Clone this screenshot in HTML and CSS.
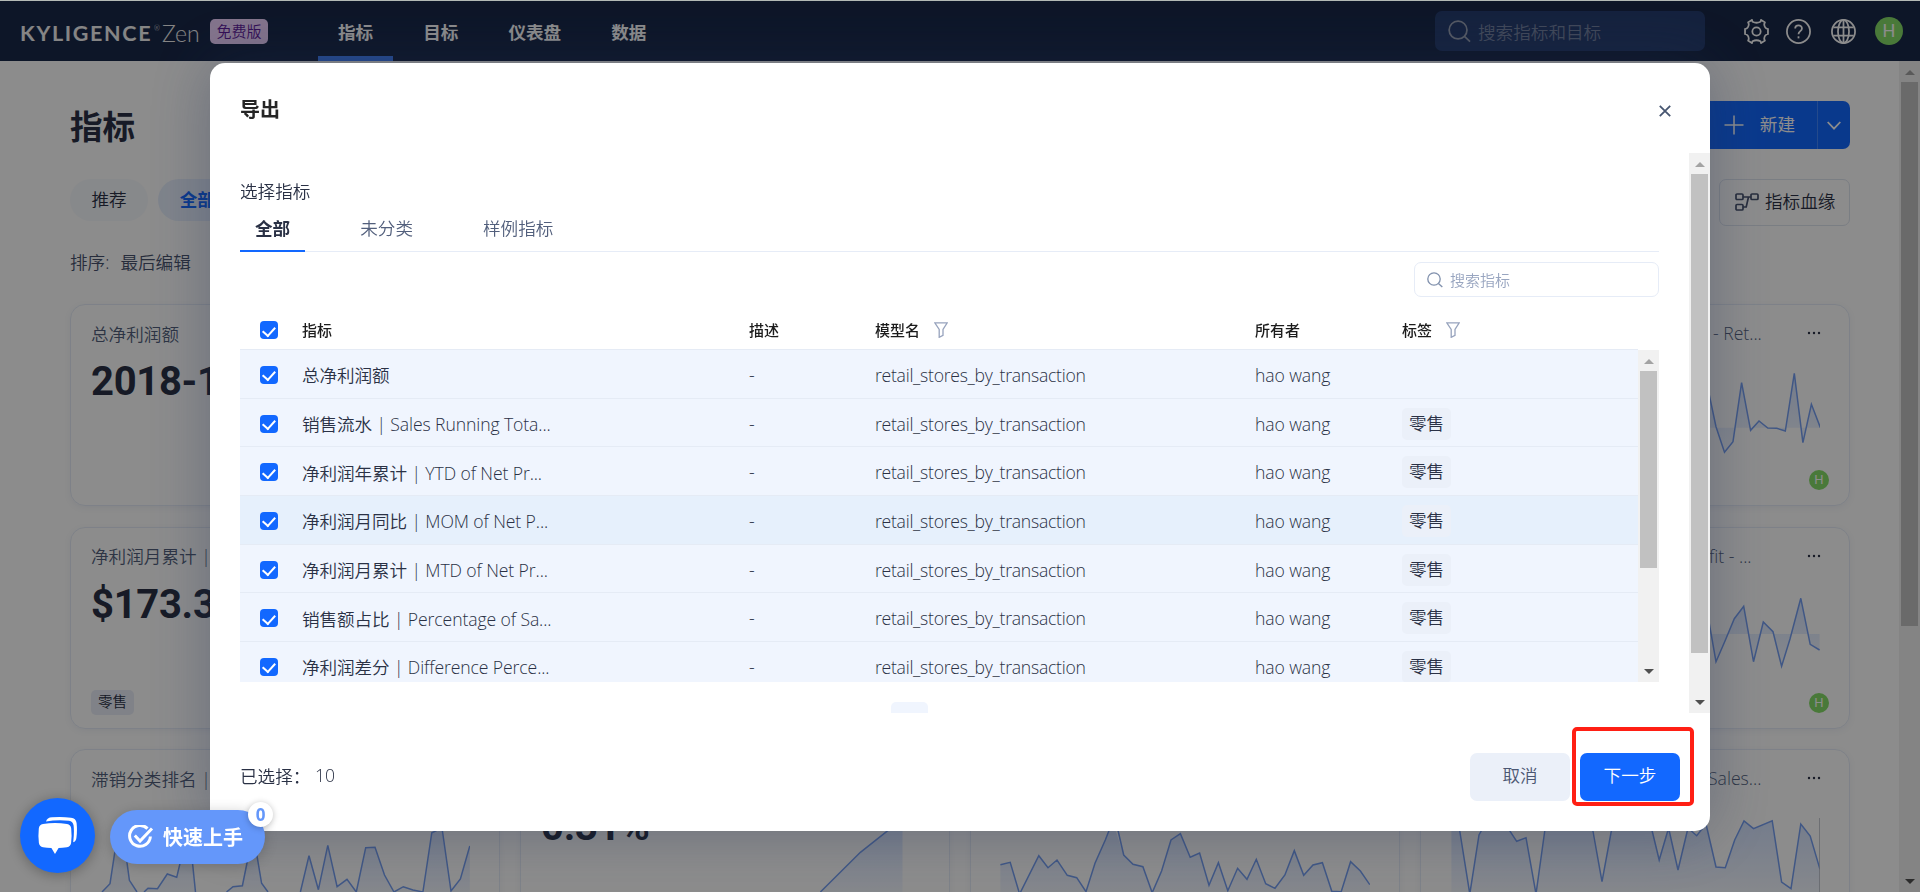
FILE: index.html
```html
<!DOCTYPE html>
<html lang="zh-CN">
<head>
  <meta charset="UTF-8" />
  <meta name="viewport" content="width=device-width, initial-scale=1.0" />
  <title>指标 - Kyligence Zen</title>
  <link rel="stylesheet" href="styles.css">
</head>
<body>
  <svg class="sprite" width="0" height="0">
    <defs>
      <linearGradient id="area" x1="0" y1="0" x2="0" y2="1">
        <stop offset="0" stop-color="#6fa0ff" stop-opacity="0.3" />
        <stop offset="1" stop-color="#6fa0ff" stop-opacity="0.08" />
      </linearGradient>
      <symbol id="icon-search" viewBox="0 0 24 24"><circle cx="10.5" cy="10.5" r="9.3" /><path d="M17.2 17.2L23 22.6" /></symbol>
      <symbol id="icon-filter" viewBox="0 0 14 16"><path d="M0.8 0.9H13.2L9 7.5V13.3L5.2 15.3V7.5Z" /></symbol>
      <symbol id="icon-more" viewBox="0 0 14 4"><circle cx="2" cy="2" r="1.2" /><circle cx="7" cy="2" r="1.2" /><circle cx="12" cy="2" r="1.2" /></symbol>
    </defs>
  </svg>

  <header>
    <div class="logo"><span class="logo-name">KYLIGENCE</span><span class="logo-mark">®</span><span class="logo-zen">Zen</span></div>
    <span class="edition">免费版</span>
    <nav>
      <a class="nav-item active">指标</a>
      <a class="nav-item">目标</a>
      <a class="nav-item">仪表盘</a>
      <a class="nav-item">数据</a>
    </nav>
    <div class="header-search">
      <svg><use href="#icon-search" /></svg>
      <span>搜索指标和目标</span>
    </div>
    <svg class="header-icon gear" viewBox="0 0 24 24">
      <path d="M8.2 2.6Q12 4.6 15.8 2.6L16.4 0.9L20 3.2L19.4 5Q19.6 9 23 9.6V14.4Q19.6 15 19.4 19L20 20.8L16.4 23.1L15.8 21.4Q12 19.4 8.2 21.4L7.6 23.1L4 20.8L4.6 19Q4.4 15 1 14.4V9.6Q4.4 9 4.6 5L4 3.2L7.6 0.9Z" />
      <circle cx="12" cy="12" r="4" />
    </svg>
    <svg class="header-icon help" viewBox="0 0 24 24">
      <circle cx="12" cy="12" r="11.1" />
      <path d="M8.8 9.2C8.8 5 15.3 5 15.3 9.1C15.3 11.8 12 11.6 12 14.6" /><path d="M12 16.6V18.6" />
    </svg>
    <svg class="header-icon globe" viewBox="0 0 24 24">
      <circle cx="12" cy="12" r="11.1" /><ellipse cx="12" cy="12" rx="5.3" ry="11.1" />
      <path d="M12 1V23M2.3 8H21.7M2.3 16H21.7" />
    </svg>
    <span class="avatar">H</span>
  </header>

  <div class="page">
    <main>
      <div class="page-top">
        <h1>指标</h1>
        <div class="new-button">
          <span class="new-main"><svg viewBox="0 0 20 20"><path d="M10 0.5V19.5M0.5 10H19.5" /></svg><span>新建</span></span>
          <span class="new-more"><svg viewBox="0 0 14 9"><path d="M0.7 1L7 7.6L13.3 1" /></svg></span>
        </div>
      </div>
      <div class="page-filter">
        <span class="pill">推荐</span>
        <span class="pill active">全部</span>
        <span class="lineage">
          <svg viewBox="0 0 24 18"><rect x="1" y="1" width="7" height="5.5" rx="1" /><rect x="1" y="11.5" width="7" height="5.5" rx="1" /><rect x="16" y="1" width="7" height="5.5" rx="1" /><path d="M8 4H16M13.5 4L11.2 14H8" /></svg>
          指标血缘
        </span>
      </div>
      <div class="sort"><span>排序:</span><span>最后编辑</span></div>

      <div class="cards">
        <section class="card">
          <div class="card-title"><span>总净利润额</span></div>
          <div class="card-value">2018-12</div>
        </section>
        <section class="card"></section>
        <section class="card"></section>
        <section class="card">
          <div class="card-title right"><span>- Ret...</span><svg class="more"><use href="#icon-more" /></svg></div>
          <svg class="chart short" viewBox="1450 366 370 94">
            <path class="area" d="M1710 427.7V398.3L1716 426.7L1724.5 452.3L1733 441.7L1741.6 382.7L1750.6 430.3L1759 421L1767.8 428L1776.7 428.3L1785.3 431L1794.3 373.3L1802.9 442.7L1811.4 404.3L1820.4 427.7Z" />
            <path class="line" d="M1707 384L1710 398.3L1716 426.7L1724.5 452.3L1733 441.7L1741.6 382.7L1750.6 430.3L1759 421L1767.8 428L1776.7 428.3L1785.3 431L1794.3 373.3L1802.9 442.7L1811.4 404.3L1820.4 427.7" />
          </svg>
          <span class="avatar small">H</span>
        </section>

        <section class="card">
          <div class="card-title"><span>净利润月累计 |</span></div>
          <div class="card-value">$173.3K</div>
          <span class="card-tag">零售</span>
        </section>
        <section class="card"></section>
        <section class="card"></section>
        <section class="card">
          <div class="card-title right second"><span>fit - ...</span><svg class="more"><use href="#icon-more" /></svg></div>
          <svg class="chart short" viewBox="1450 588 370 94">
            <path class="area" d="M1710 633V626.7L1716 660.7L1725 640L1734.3 617.7L1743.7 605.3L1753.5 660.7L1763.3 621L1773 630.7L1781.6 665.3L1790 638L1800.8 597.3L1810.2 643.3L1819.6 649V633Z" />
            <path class="line" d="M1706 604L1710 626.7L1716 660.7L1725 640L1734.3 617.7L1743.7 605.3L1753.5 660.7L1763.3 621L1773 630.7L1781.6 665.3L1790 638L1800.8 597.3L1810.2 643.3L1819.6 649" />
          </svg>
          <span class="avatar small">H</span>
        </section>

        <section class="card">
          <div class="card-title"><span>滞销分类排名 |</span></div>
          <svg class="chart tall" viewBox="100 811 370 110">
            <path class="area" d="M102 892L110 883.7L114.7 853L120 835L125 848L129.4 880.3L137 892H144L148 888.3L157.5 888.7L167.3 874L176.7 877.3L182 855L191 848L195.5 892H226.5L233 886.7L242.4 885.7L248 858L256 850L261.6 883.3L268 892H300.4L309 855.7L318.4 889.7L327.8 845.3L337.1 886.7L347 879.3L356.3 892L365.7 847.7L375 847.3L384.5 875L394 892L403.3 886.7L413 890L422.9 892L431.8 832.7L442 830L451 891L460.4 879L469.8 846V892Z" />
            <path class="line" d="M102 892L110 883.7L114.7 853L120 835L125 848L129.4 880.3L137 892M144 892L148 888.3L157.5 888.7L167.3 874L176.7 877.3L182 855L188 835L191 848L195.5 892M226.5 892L233 886.7L242.4 885.7L248 858L252 835L256 850L261.6 883.3L268 892M300.4 892L309 855.7L318.4 889.7L327.8 845.3L337.1 886.7L347 879.3L356.3 892L365.7 847.7L375 847.3L384.5 875L394 892L403.3 886.7L413 890L422.9 892L431.8 832.7L442 828L451 891L460.4 879L469.8 846" />
          </svg>
        </section>
        <section class="card">
          <div class="card-title"><span>销售额占比</span></div>
          <div class="card-value">0.31%</div>
          <svg class="chart low" viewBox="552 811 370 110">
            <path class="area" d="M820.4 892L860.4 852.3L887.8 830.7L902.5 819V892Z" />
            <path class="line" d="M820.4 892L860.4 852.3L887.8 830.7L902.5 819" />
          </svg>
        </section>
        <section class="card">
          <div class="card-title"><span>净利润</span></div>
          <svg class="chart tall" viewBox="1000 811 370 110">
            <path class="area" d="M1000.4 892V864.7L1010.2 862.3L1019.6 894L1038.8 855.7L1048 867.7L1057 860L1067.3 875.3L1076.7 877.7L1086 891.7L1095 863.3L1105.3 840L1112 820L1123.7 855L1133 864.3L1142.9 866.7L1152.2 892.7L1161.6 871L1171 840L1180.4 833.7L1190.2 857.3L1199.6 853L1209 885.3L1218.4 862.7L1227.8 890.7L1237.6 868.3L1247 879.3L1256.3 859.3L1265.7 883.7L1275 888.3L1284.9 875L1294.3 850.7L1303.7 875.3L1313 865L1322.4 862.7L1331.8 891.3L1341.2 891.7L1350.6 861.7L1360.4 871L1369.8 884.7V892Z" />
            <path class="line" d="M1000.4 864.7L1010.2 862.3L1019.6 894L1038.8 855.7L1048 867.7L1057 860L1067.3 875.3L1076.7 877.7L1086 891.7L1095 863.3L1105.3 840L1110 828L1117 826L1123.7 855L1133 864.3L1142.9 866.7L1152.2 892.7L1161.6 871L1171 840L1180.4 833.7L1190.2 857.3L1199.6 853L1209 885.3L1218.4 862.7L1227.8 890.7L1237.6 868.3L1247 879.3L1256.3 859.3L1265.7 883.7L1275 888.3L1284.9 875L1294.3 850.7L1303.7 875.3L1313 865L1322.4 862.7L1331.8 891.3L1341.2 891.7L1350.6 861.7L1360.4 871L1369.8 884.7" />
          </svg>
        </section>
        <section class="card">
          <div class="card-title right third"><span>Sales...</span><svg class="more"><use href="#icon-more" /></svg></div>
          <svg class="chart tall" viewBox="1450 811 370 110">
            <path class="area" d="M1451.4 892V820H1458L1469.8 892L1479 835L1486 822H1504L1516.7 841.3L1526 837.7L1536 892L1546 822H1590L1602 881.7L1613 822H1650L1659.2 860L1668.6 828L1678 870L1688 828L1696.7 835.7L1706 824L1716 867L1725.3 867.7L1734.7 840L1744 821L1753.5 828.7L1772.2 820.7L1781.6 882L1791 888.7L1800.8 824L1810.2 836L1820 869.3V892Z" />
            <path class="line" d="M1458 820L1469.8 894L1479 835L1484 826L1504 822L1516.7 841.3L1526 837.7L1536 894L1546 822M1592 826L1602 881.7L1613 822M1650 822L1659.2 860L1668.6 828L1678 870L1688 828L1696.7 835.7L1706 824L1716 867L1725.3 867.7L1734.7 840L1744 821L1753.5 828.7L1772.2 820.7L1781.6 882L1791 888.7L1800.8 824L1810.2 836L1820 869.3" />
            <path class="axis" d="M1820 818V892" />
          </svg>
        </section>
      </div>
    </main>
    <div class="scrollbar page-scroll"><i class="up"></i><b></b><i class="down"></i></div>
  </div>

  <div class="overlay">
    <div class="modal">
      <div class="modal-header">
        <h2>导出</h2>
        <svg class="close" viewBox="0 0 12 12"><path d="M0.8 0.8L11.2 11.2M11.2 0.8L0.8 11.2" /></svg>
      </div>
      <div class="modal-body">
        <div class="modal-content">
          <div class="label">选择指标</div>
          <div class="tabs">
            <span class="tab active">全部</span>
            <span class="tab">未分类</span>
            <span class="tab">样例指标</span>
          </div>
          <div class="search">
            <svg><use href="#icon-search" /></svg>
            <span>搜索指标</span>
          </div>
          <div class="row head">
            <span><i class="check"></i></span>
            <span>指标</span>
            <span>描述</span>
            <span>模型名<svg class="filter"><use href="#icon-filter" /></svg></span>
            <span>所有者</span>
            <span>标签<svg class="filter"><use href="#icon-filter" /></svg></span>
          </div>
          <div class="table-body">
            <div class="rows">
              <div class="row"><span><i class="check"></i></span><span>总净利润额</span><span>-</span><span class="model">retail_stores_by_transaction</span><span>hao wang</span><span></span></div>
              <div class="row"><span><i class="check"></i></span><span>销售流水 | Sales Running Tota...</span><span>-</span><span class="model">retail_stores_by_transaction</span><span>hao wang</span><span><em class="tag">零售</em></span></div>
              <div class="row"><span><i class="check"></i></span><span>净利润年累计 | YTD of Net Pr...</span><span>-</span><span class="model">retail_stores_by_transaction</span><span>hao wang</span><span><em class="tag">零售</em></span></div>
              <div class="row hover"><span><i class="check"></i></span><span>净利润月同比 | MOM of Net P...</span><span>-</span><span class="model">retail_stores_by_transaction</span><span>hao wang</span><span><em class="tag">零售</em></span></div>
              <div class="row"><span><i class="check"></i></span><span>净利润月累计 | MTD of Net Pr...</span><span>-</span><span class="model">retail_stores_by_transaction</span><span>hao wang</span><span><em class="tag">零售</em></span></div>
              <div class="row"><span><i class="check"></i></span><span>销售额占比 | Percentage of Sa...</span><span>-</span><span class="model">retail_stores_by_transaction</span><span>hao wang</span><span><em class="tag">零售</em></span></div>
              <div class="row"><span><i class="check"></i></span><span>净利润差分 | Difference Perce...</span><span>-</span><span class="model">retail_stores_by_transaction</span><span>hao wang</span><span><em class="tag">零售</em></span></div>
            </div>
            <div class="scrollbar table-scroll"><i class="up"></i><b></b><i class="down"></i></div>
          </div>
          <div class="pager"></div>
        </div>
        <div class="scrollbar modal-scroll"><i class="up"></i><b></b><i class="down"></i></div>
      </div>
      <div class="modal-footer">
        <span class="selected">已选择：</span><span class="count">10</span>
        <button class="btn">取消</button>
        <button class="btn primary">下一步<span class="highlight"></span></button>
      </div>
    </div>
  </div>

  <div class="chat">
    <svg viewBox="0 0 40 37">
      <path d="M8 4.5Q9 0.5 14 0.3Q24 -0.4 33 0.7Q38 1.2 38.6 6Q39.4 14 38.4 21Q38 24.6 35.2 25.2Q36.4 15 35.6 8.5Q35 4.2 31 3.7Q19 2.4 8 4.5Z" />
      <path d="M5 7Q17 4.8 29 7Q32.8 7.6 33.2 11.5Q34 19 33.1 26Q32.6 29.6 29 30.2Q24 31 20.6 31L17 37L13.4 31Q9 31 5 30.2Q1.4 29.6 0.9 26Q0 19 0.8 11.5Q1.2 7.7 5 7Z" />
    </svg>
  </div>
  <div class="quick-start">
    <svg viewBox="0 0 26 24"><path d="M19.5 3.6A10.4 10.4 0 1 0 22.4 11.5" /><path d="M6.8 10.5L12 16L24 3.5" /></svg>
    快速上手
    <span class="quick-badge">0</span>
  </div>
</body>
</html>
```

FILE: styles.css
```css
:root {
  --blue: #1268ff;
  --text: #2a3145;
  --muted: #525f7c;
  --border: #e6ecf7;
}

* {
  box-sizing: border-box;
}

body {
  margin: 0;
  height: 100vh;
  overflow: hidden;
  border-top: 1px solid #b4bab6;
  font-family: 'Open Sans', 'Noto Sans CJK SC', sans-serif;
  font-size: 17.6px;
  font-weight: 350;
  color: var(--text);
  background: #fff;
}

.sprite {
  position: absolute;
}

svg {
  fill: none;
  stroke: currentColor;
  flex: none;
}

header {
  height: 60px;
  display: flex;
  align-items: center;
  padding: 0 17px 0 20px;
  background: #182849;
  color: #fff;
}

.logo {
  width: 190px;
  display: flex;
  align-items: center;
  font-family: Lato, sans-serif;
  color: #f2f2f2;
  line-height: 30px;
  padding-top: 4px;
}

.logo-name {
  width: 134px;
  font-size: 21.5px;
  font-weight: 700;
  letter-spacing: 1.65px;
}

.logo-mark {
  width: 8px;
  font-size: 7px;
  margin-top: -11px;
}

.logo-zen {
  font-size: 23px;
}

.edition {
  width: 58px;
  height: 25px;
  line-height: 24px;
  border-radius: 5px;
  text-align: center;
  font-size: 15px;
  color: #5f1a9c;
  background: #f0d4ff;
}

nav {
  display: flex;
  align-self: stretch;
  margin-left: 50px;
  gap: 10px;
}

.nav-item {
  padding: 0 20px;
  line-height: 62px;
  font-weight: 700;
  border-bottom: 5px solid transparent;
}

.nav-item.active {
  border-color: #4284ff;
}

.header-search {
  width: 270px;
  height: 40px;
  margin-left: auto;
  padding-left: 13px;
  display: flex;
  align-items: center;
  gap: 7px;
  border-radius: 7px;
  background: #263e70;
  color: #7684a2;
}

.header-search svg {
  width: 23px;
  height: 23px;
  stroke-width: 1.8;
  color: #9aa3b5;
}

.header-icon {
  width: 25px;
  height: 25px;
  stroke-width: 1.7;
}

.gear {
  margin-left: 39px;
}

.help {
  margin-left: 17px;
}

.globe {
  margin: 0 19px 0 20px;
}

.avatar {
  width: 28px;
  height: 28px;
  border-radius: 50%;
  line-height: 28px;
  text-align: center;
  font-family: Roboto, sans-serif;
  font-weight: 400;
  font-size: 18px;
  color: #fff;
  background: #86dd68;
}

.page {
  display: flex;
  height: 831px;
  overflow: hidden;
}

main {
  flex: 1;
  padding: 40px 49px 0 70px;
}

.page-top {
  height: 48px;
  display: flex;
  justify-content: space-between;
}

h1 {
  margin: 0;
  font-size: 32.5px;
  line-height: 52px;
  font-weight: 700;
}

.new-button {
  display: flex;
  width: 160px;
  height: 48px;
  color: #fff;
  background: var(--blue);
  border-radius: 7px;
}

.new-main {
  flex: 1;
  display: flex;
  align-items: center;
  justify-content: flex-end;
  gap: 16px;
  padding-right: 22px;
  border-right: 1px solid #4387ff;
  font-weight: 400;
}

.new-main span {
  padding-bottom: 4px;
}

.new-main svg {
  width: 20px;
  stroke-width: 1.5;
}

.new-more {
  width: 32px;
  display: flex;
  align-items: center;
  justify-content: center;
}

.new-more svg {
  width: 14px;
  stroke-width: 1.8;
}

.page-filter {
  display: flex;
  gap: 10px;
  margin-top: 30px;
}

.pill {
  height: 42px;
  line-height: 40px;
  padding: 0 21.5px;
  border-radius: 21px;
  background: #f6f9fe;
}

.pill.active {
  color: var(--blue);
  font-weight: 700;
  background: #e8f0fe;
}

.lineage {
  width: 131px;
  height: 47px;
  margin-left: auto;
  padding: 0 0 4px 15px;
  display: flex;
  align-items: center;
  gap: 6px;
  border: 1px solid #dfe5ef;
  border-radius: 7px;
  white-space: nowrap;
}

.lineage svg {
  width: 24px;
  margin-top: 3px;
  stroke-width: 1.7;
  color: #48536e;
}

.sort {
  display: flex;
  gap: 11px;
  height: 26px;
  line-height: 23px;
  margin-top: 25px;
  color: #48536e;
}

.cards {
  display: grid;
  grid-template-columns: repeat(4, 1fr);
  grid-auto-rows: 202px;
  gap: 20.5px 20px;
  margin-top: 27px;
}

.card {
  display: flex;
  flex-direction: column;
  position: relative;
  border: 1px solid var(--border);
  border-radius: 15px;
  padding: 14px 20px 13px;
  box-shadow: 0 2px 6px rgba(60, 90, 150, 0.08);
}

.card-title {
  display: flex;
  align-items: center;
  height: 28px;
  color: var(--muted);
  white-space: nowrap;
}

.card-title.right {
  justify-content: space-between;
  padding: 0 8px 0 272px;
}

.card-title.second {
  padding-left: 268px;
}

.card-title.third {
  padding-left: 267px;
}

.more {
  width: 14px;
  height: 4px;
  fill: currentColor;
  stroke: none;
  color: var(--text);
}

.card-value {
  font: 700 40px/48px Roboto, sans-serif;
  margin-top: 11px;
  letter-spacing: -0.3px;
}

.card-tag {
  align-self: flex-start;
  margin-top: auto;
  height: 25px;
  line-height: 24px;
  padding: 0 7px;
  border-radius: 5px;
  font-size: 14.5px;
  background: #e9edf7;
}

.avatar.small {
  width: 20px;
  height: 20px;
  line-height: 20px;
  margin: auto 0 2px auto;
  font-size: 13px;
}

.chart {
  width: 370px;
  margin: 0 9px;
}

.chart.short {
  height: 94px;
  margin-top: 19px;
}

.chart.tall {
  height: 110px;
  margin-top: 19px;
}

.chart.low {
  height: 110px;
  margin: -40px 0 0 11px;
}

.line {
  stroke: #769ff2;
  stroke-width: 1.5;
}

.area {
  fill: url(#area);
  stroke: none;
}

.axis {
  stroke: #b5b9c2;
  stroke-width: 1.5;
}

/* Scrollbars */
.scrollbar {
  flex: none;
  width: 21px;
  display: flex;
  flex-direction: column;
  align-items: center;
  background: #f1f1f1;
  position: relative;
  z-index: 1;
}

.scrollbar b {
  width: 17px;
  background: #c1c1c1;
}

.scrollbar i {
  height: 21px;
  display: flex;
  align-items: center;
}

.scrollbar i::before {
  content: '';
  border: 5px solid transparent;
}

.scrollbar .up::before {
  border-bottom-color: #a3a3a3;
  border-top: 0;
  margin-top: 2px;
}

.scrollbar .down {
  margin-top: auto;
}

.scrollbar .down::before {
  border-top-color: #505050;
  border-bottom: 0;
}

.page-scroll b {
  height: 544px;
}

.modal-scroll b {
  height: 479px;
}

.table-scroll b {
  height: 197px;
}

/* Export dialog */
.overlay {
  position: fixed;
  inset: 1px 0 0 0;
  z-index: 10;
  display: flex;
  justify-content: center;
  align-items: flex-start;
  padding-top: 62px;
  background: rgba(0, 0, 0, 0.45);
}

.modal {
  width: 1500px;
  height: 768px;
  border-radius: 15px;
  background: #fff;
  box-shadow: 0 0 62px rgba(35, 50, 85, 0.35);
}

.modal-header {
  height: 90px;
  padding: 0 39px 0 30px;
  display: flex;
  justify-content: space-between;
}

h2 {
  margin: 32px 0 0;
  font-size: 20px;
  line-height: 30px;
  font-weight: 700;
  color: #252525;
}

.close {
  width: 12px;
  height: 12px;
  margin-top: 42px;
  stroke-width: 1.8;
  color: #465570;
}

.modal-body {
  display: flex;
  height: 560px;
  overflow: hidden;
}

.modal-content {
  flex: 1;
  padding: 24px 30px 0;
}

.label {
  height: 28px;
  line-height: 28px;
}

.tabs {
  display: flex;
  gap: 40px;
  height: 47px;
  border-bottom: 1px solid var(--border);
}

.tab {
  padding: 9px 15px 0;
  line-height: 28px;
  height: 47px;
  color: var(--muted);
}

.tab.active {
  font-weight: 700;
  color: var(--text);
  border-bottom: 2px solid var(--blue);
}

.search {
  width: 245px;
  height: 35px;
  margin: 10px 0 0 auto;
  padding-left: 12px;
  display: flex;
  align-items: center;
  gap: 7px;
  border: 1px solid var(--border);
  border-radius: 7px;
  font-size: 15px;
  color: #98a5c0;
}

.search svg {
  width: 16px;
  height: 16px;
  stroke-width: 2;
  color: #8191ad;
}

.row {
  display: grid;
  grid-template-columns: 62px 447px 126px 380px 147px 1fr;
  height: 48.7px;
  padding-top: 2px;
  border-bottom: 1px solid #e5ebf5;
  background: #f0f5fe;
}

.row > span {
  display: flex;
  align-items: center;
  white-space: nowrap;
  letter-spacing: -0.1px;
}

.row > .model {
  letter-spacing: -0.26px;
}

.row.hover {
  background: #e6f0fc;
}

.row.head {
  height: 53px;
  padding-top: 12px;
  margin-right: 21px;
  background: none;
  font-size: 15px;
  font-weight: 500;
  color: #1c1c1c;
}

.row.head > span {
  letter-spacing: 0;
}

.filter {
  width: 14px;
  height: 16px;
  margin: 2px 0 0 14px;
  stroke-width: 1.3;
  color: #97a3bd;
}

.check {
  width: 18px;
  height: 18px;
  margin-left: 20px;
  border-radius: 4px;
  background: var(--blue);
  display: flex;
  justify-content: center;
}

.head .check {
  margin-top: 2px;
}

.check::after {
  content: '';
  width: 5.5px;
  height: 10px;
  margin: 2.5px 1px 0 0;
  border: solid #fff;
  border-width: 0 2px 2px 0;
  transform: rotate(42deg);
}

.tag {
  font-style: normal;
  height: 32px;
  line-height: 31px;
  padding: 0 7px;
  border-radius: 5px;
  letter-spacing: 0;
  background: #ebf0f9;
}

.table-body {
  display: flex;
  height: 332px;
  overflow: hidden;
}

.rows {
  flex: 1;
}

.pager {
  width: 37px;
  height: 37px;
  margin: 20px 0 0 651px;
  border-radius: 5px;
  background: #f0f5fe;
}

.modal-footer {
  display: flex;
  align-items: center;
  height: 118px;
  padding: 10px 30px 0;
}

.selected {
  width: 75px;
  padding-bottom: 4px;
}

.count {
  margin-right: auto;
  padding-bottom: 4px;
}

.btn {
  position: relative;
  width: 100px;
  height: 48px;
  margin-left: 10px;
  padding: 0 0 5px;
  border: none;
  border-radius: 7px;
  font: inherit;
  color: #4b5773;
  background: #ebf0f9;
}

.btn.primary {
  color: #fff;
  background: var(--blue);
}

/* red frame drawn round the next-step button */
.highlight {
  position: absolute;
  left: -8px;
  top: -26px;
  width: 122px;
  height: 79px;
  border: 4px solid #ff1f14;
  border-radius: 5px;
}

/* Floating helpers */
.chat {
  position: fixed;
  left: 20px;
  top: 798px;
  z-index: 20;
  width: 75px;
  height: 75px;
  border-radius: 50%;
  background: var(--blue);
  box-shadow: 0 2px 14px rgba(0, 0, 0, 0.3);
}

.chat svg {
  width: 40px;
  margin: 19px 0 0 18px;
  fill: #fff;
  stroke: none;
}

.quick-start {
  position: fixed;
  left: 110px;
  top: 810px;
  z-index: 20;
  width: 155px;
  height: 54px;
  border-radius: 27px;
  padding: 0 0 1px 18px;
  display: flex;
  align-items: center;
  gap: 9px;
  font-size: 20px;
  font-weight: 700;
  color: #fff;
  background: #6497fa;
  box-shadow: 0 2px 14px rgba(0, 0, 0, 0.2);
}

.quick-start svg {
  width: 26px;
  stroke-width: 3;
}

.quick-badge {
  position: absolute;
  left: 138px;
  top: -8px;
  width: 25px;
  height: 25px;
  border-radius: 50%;
  line-height: 25px;
  text-align: center;
  font-size: 17px;
  color: #6497fa;
  background: #fff;
  box-shadow: 0 1px 6px rgba(0, 0, 0, 0.25);
}
```
